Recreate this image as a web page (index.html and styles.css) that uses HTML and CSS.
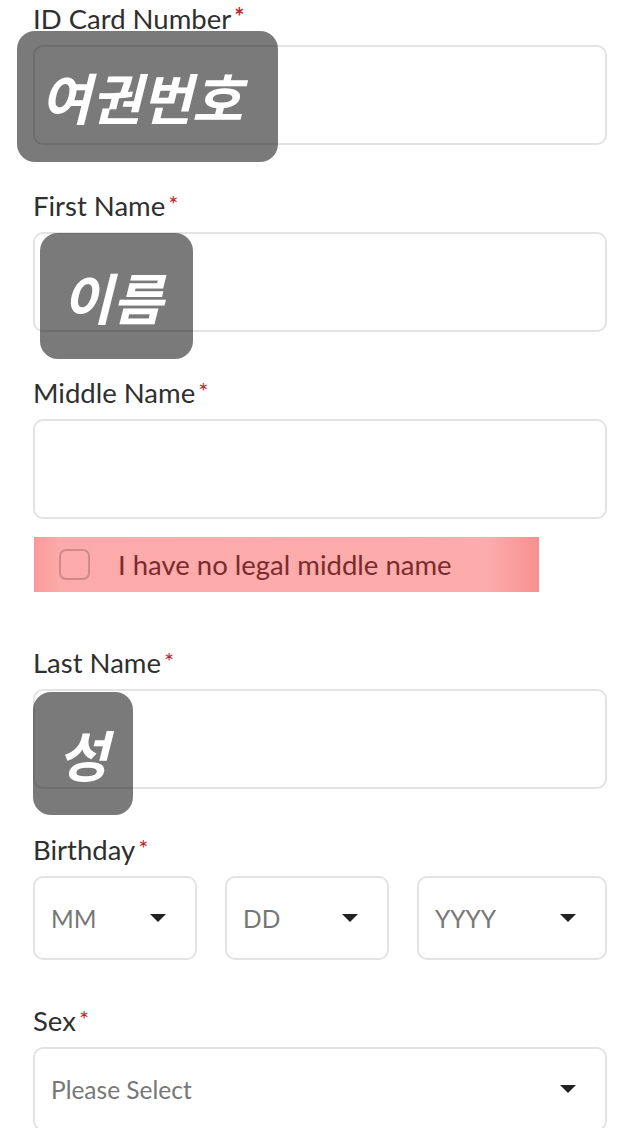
FILE: index.html
```html
<!DOCTYPE html>
<html lang="en">
  <head>
    <meta charset="UTF-8" />
    <meta name="viewport" content="width=device-width, initial-scale=1.0" />
    <title>Personal Information</title>
    <link rel="stylesheet" href="styles.css">
  </head>
  <body>
    <form class="form">
      <!-- ID Card Number -->
      <div class="field">
        <label class="field-label">ID Card Number<span class="req req-bold">*</span></label>
        <div class="input-wrap">
          <input class="text-input" type="text" />
          <div class="note note-id">여권번호</div>
        </div>
      </div>

      <!-- First Name -->
      <div class="field">
        <label class="field-label">First Name<span class="req">*</span></label>
        <div class="input-wrap">
          <input class="text-input" type="text" />
          <div class="note note-first">이름</div>
        </div>
      </div>

      <!-- Middle Name -->
      <div class="field field-middle">
        <label class="field-label">Middle Name<span class="req">*</span></label>
        <input class="text-input" type="text" />
        <div class="no-middle">
          <span class="check-box"></span>
          <span class="check-text">I have no legal middle name</span>
        </div>
      </div>

      <!-- Last Name -->
      <div class="field">
        <label class="field-label">Last Name<span class="req">*</span></label>
        <div class="input-wrap">
          <input class="text-input" type="text" />
          <div class="note note-last">성</div>
        </div>
      </div>

      <!-- Birthday -->
      <div class="field">
        <label class="field-label">Birthday<span class="req">*</span></label>
        <div class="birthday-row">
          <div class="select-box"><span class="placeholder">MM</span><span class="caret"></span></div>
          <div class="select-box"><span class="placeholder">DD</span><span class="caret"></span></div>
          <div class="select-box"><span class="placeholder">YYYY</span><span class="caret"></span></div>
        </div>
      </div>

      <!-- Sex -->
      <div class="field">
        <label class="field-label">Sex<span class="req">*</span></label>
        <div class="select-box"><span class="placeholder">Please Select</span><span class="caret"></span></div>
      </div>
    </form>
  </body>
</html>
```

FILE: styles.css
```css
body {
  margin: 0;
  background: #fff;
  font-family: Lato, "Noto Sans", sans-serif;
  color: #333;
}

.form {
  padding: 1px 33px 0;
}

.field {
  margin-bottom: 43px;
}

.field-label {
  display: block;
  height: 36px;
  line-height: 36px;
  font-size: 27.5px;
  color: #2f2f2f;
  margin-bottom: 8px;
  white-space: nowrap;
}

.req {
  color: #c0272d;
  font-size: 24px;
  line-height: 1;
  vertical-align: top;
  position: relative;
  top: 4px;
  margin-left: 3px;
}

.req-bold {
  font-weight: bold;
}

.input-wrap {
  position: relative;
}

.text-input {
  display: block;
  box-sizing: border-box;
  width: 100%;
  height: 100px;
  border: 2px solid #e3e3e3;
  border-radius: 10px;
  background: #fff;
  margin: 0;
}

/* 注釈ラベル */
.note {
  position: absolute;
  box-sizing: border-box;
  background: rgba(0, 0, 0, 0.52);
  border-radius: 18px;
  color: #fff;
  font-family: "Noto Sans CJK KR", sans-serif;
  font-weight: bold;
  font-style: italic;
  font-size: 55px;
  line-height: 1;
  display: flex;
  align-items: center;
  justify-content: center;
}

.note-id {
  left: -16px;
  top: -14px;
  width: 261px;
  height: 131px;
  padding-right: 12px;
}

.note-first {
  left: 7px;
  top: 1px;
  width: 153px;
  height: 126px;
  padding-right: 8px;
}

.note-last {
  left: 0;
  top: 3px;
  width: 100px;
  height: 123px;
}

.field-middle {
  margin-bottom: 53px;
}

.no-middle {
  margin-top: 18px;
  width: 505px;
  margin-left: 1px;
  height: 55px;
  display: flex;
  align-items: center;
  background: linear-gradient(to right, #f99a9a 0, #fcaaaa 5%, #fdacac 90%, #f89090 100%);
}

.check-box {
  box-sizing: border-box;
  width: 31px;
  height: 31px;
  margin-left: 25px;
  border: 2px solid #cf8a8a;
  border-radius: 7px;
}

.check-text {
  margin-left: 28px;
  font-size: 27.5px;
  color: #7a2b2e;
  white-space: nowrap;
}

.birthday-row {
  display: grid;
  grid-template-columns: 164px 164px 1fr;
  gap: 28px;
}

.select-box {
  box-sizing: border-box;
  height: 84px;
  border: 2px solid #e3e3e3;
  border-radius: 10px;
  display: flex;
  align-items: center;
  justify-content: space-between;
  padding: 0 29px 0 16px;
}

.placeholder {
  font-size: 24.5px;
  color: #777;
}

.caret {
  width: 0;
  height: 0;
  border-left: 8px solid transparent;
  border-right: 8px solid transparent;
  border-top: 8px solid #222;
}
```
